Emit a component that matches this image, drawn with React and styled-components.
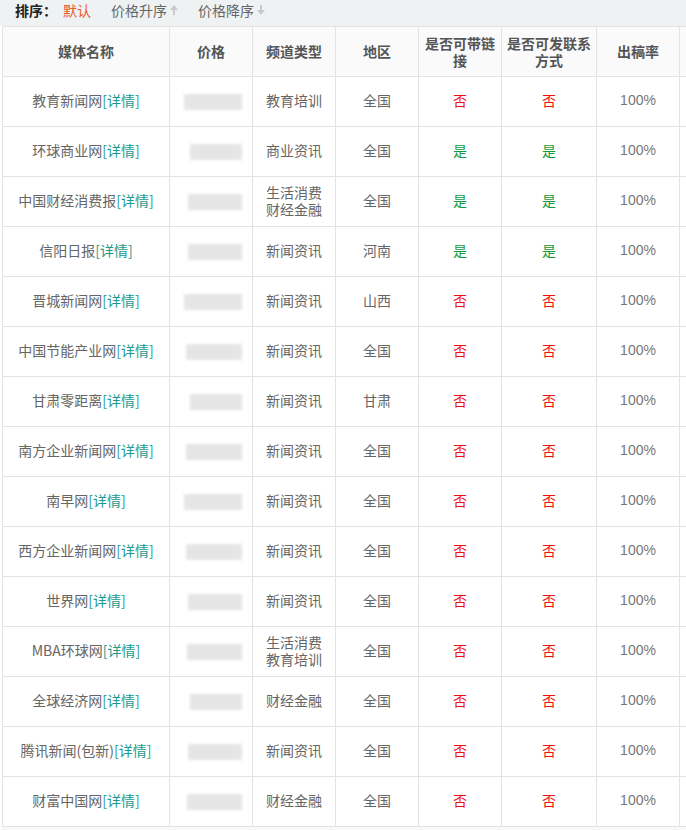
import styled, { createGlobalStyle } from "styled-components";

const GlobalStyle = createGlobalStyle`
  html, body {
    margin: 0;
    padding: 0;
    background: #fff;
    overflow: hidden;
    font-family: "Noto Sans CJK SC", "Liberation Sans", sans-serif;
  }
`;

const SortBar = styled.div`
  display: flex;
  align-items: center;
  height: 26px;
  padding: 0 0 6px 15px;
  box-sizing: border-box;
  background: #eff2f3;
  font-size: 14px;
  line-height: 20px;
  color: #666;
`;

const SortLabel = styled.span`
  color: #222;
  font-weight: bold;
  margin-right: 6px;
`;

const SortItem = styled.span`
  display: flex;
  align-items: center;
  gap: 3px;
  margin-right: 20px;
  color: ${(p) => (p.active ? "#e8582a" : "#666")};
`;

const Table = styled.table`
  margin-left: 2px;
  width: 780px;
  border-collapse: collapse;
  table-layout: fixed;
  font-size: 14px;
  color: #666;
`;

const Th = styled.th`
  height: 49px;
  padding: 0 2px;
  border: 1px solid #e3e3e3;
  background: #fafafa;
  color: #555;
  font-weight: bold;
  line-height: 17px;
  text-align: center;
`;

const Td = styled.td`
  height: 47px;
  padding: 0 4px 2px;
  border: 1px solid #e3e3e3;
  text-align: center;
  line-height: 17px;
  white-space: pre-line;
  color: ${(p) => p.color || "#666"};
  font-family: ${(p) =>
    p.latin ? '"Liberation Sans", sans-serif' : "inherit"};
`;

const PriceTd = styled(Td)`
  padding: 0;
  height: 49px;
`;

const Blur = styled.div`
  margin: 0 auto 0 ${(p) => p.left}px;
  width: ${(p) => p.w}px;
  height: 16px;
  background: #e5e5e5;
  filter: blur(1.5px);
`;

const Detail = styled.span`
  color: #1a9a8e;
`;

const Footer = styled.div`
  height: 10px;
  margin-left: 2px;
  background: #f8f8f8;
`;

const Arrow = ({ down }) => (
  <svg width="8" height="10" viewBox="0 0 8 10">
    <path
      d={down ? "M3 0h2v5h3L4 10 0 5h3z" : "M3 10h2V5h3L4 0 0 5h3z"}
      fill="#c9c9c9"
    />
  </svg>
);

const rows = [
  ["教育新闻网", "教育培训", "全国", false, false, 58],
  ["环球商业网", "商业资讯", "全国", true, true, 52],
  ["中国财经消费报", "生活消费\n财经金融", "全国", true, true, 54],
  ["信阳日报", "新闻资讯", "河南", true, true, 54],
  ["晋城新闻网", "新闻资讯", "山西", false, false, 58],
  ["中国节能产业网", "新闻资讯", "全国", false, false, 56],
  ["甘肃零距离", "新闻资讯", "甘肃", false, false, 52],
  ["南方企业新闻网", "新闻资讯", "全国", false, false, 56],
  ["南早网", "新闻资讯", "全国", false, false, 58],
  ["西方企业新闻网", "新闻资讯", "全国", false, false, 56],
  ["世界网", "新闻资讯", "全国", false, false, 54],
  ["MBA环球网", "生活消费\n教育培训", "全国", false, false, 55],
  ["全球经济网", "财经金融", "全国", false, false, 52],
  ["腾讯新闻(包新)", "新闻资讯", "全国", false, false, 54],
  ["财富中国网", "财经金融", "全国", false, false, 55],
];

const YesNo = ({ v }) => (
  <Td color={v ? "#129a3c" : "#f01010"}>{v ? "是" : "否"}</Td>
);

export default function App() {
  return (
    <>
      <GlobalStyle />
      <SortBar>
        <SortLabel>排序：</SortLabel>
        <SortItem active>默认</SortItem>
        <SortItem>
          价格升序 <Arrow />
        </SortItem>
        <SortItem>
          价格降序 <Arrow down />
        </SortItem>
      </SortBar>
      <Table>
        <colgroup>
          <col style={{ width: 167 }} />
          <col style={{ width: 83 }} />
          <col style={{ width: 83 }} />
          <col style={{ width: 83 }} />
          <col style={{ width: 83 }} />
          <col style={{ width: 95 }} />
          <col style={{ width: 83 }} />
          <col />
        </colgroup>
        <thead>
          <tr>
            <Th>媒体名称</Th>
            <Th>价格</Th>
            <Th>频道类型</Th>
            <Th>地区</Th>
            <Th>是否可带链接</Th>
            <Th>是否可发联系方式</Th>
            <Th>出稿率</Th>
            <Th />
          </tr>
        </thead>
        <tbody>
          {rows.map(([name, cat, area, link, contact, w], i) => (
            <tr key={i}>
              <Td>
                {name}
                <Detail>[详情]</Detail>
              </Td>
              <PriceTd>
                <Blur w={w} left={72 - w} />
              </PriceTd>
              <Td>{cat}</Td>
              <Td>{area}</Td>
              <YesNo v={link} />
              <YesNo v={contact} />
              <Td latin color="#777">
                100%
              </Td>
              <Td />
            </tr>
          ))}
        </tbody>
      </Table>
      <Footer />
    </>
  );
}
